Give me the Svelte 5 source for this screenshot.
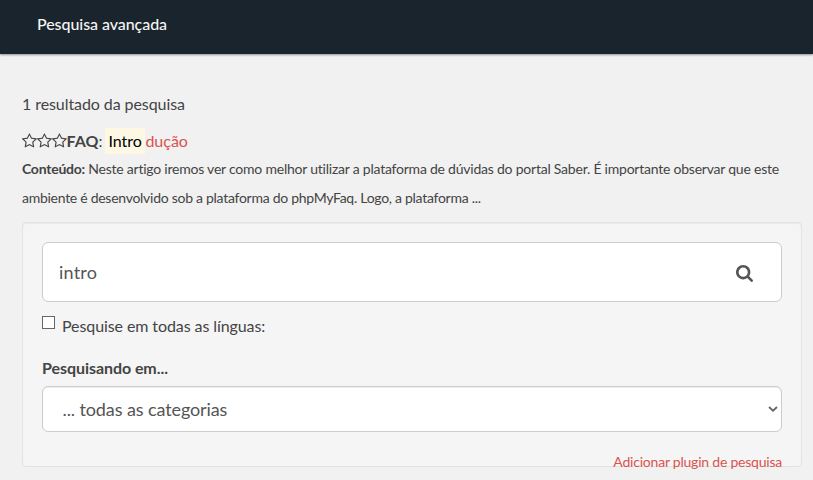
<script>
  let term = $state('intro');
  let allLanguages = $state(false);
  const stars = [0, 1, 2];
</script>

<header><h1>Pesquisa avançada</h1></header>
<main>
  <p class="count">1 resultado da pesquisa</p>
  <div class="result">
    <span class="stars">
      {#each stars as s (s)}
        <svg viewBox="64 0 1664 1792" aria-hidden="true"><path d="M1201 1004l306-297-422-62-189-382-189 382-422 62 306 297-73 421 378-199 377 199zm527-357q0 22-26 48l-363 354 86 500q1 7 1 20 0 50-41 50-19 0-40-12l-449-236-449 236q-22 12-40 12-21 0-31.5-14.5t-10.5-35.5q0-6 2-20l86-500-364-354q-25-27-25-48 0-37 56-46l502-73 225-455q19-41 49-41t49 41l225 455 502 73q56 9 56 46z" /></svg>
      {/each}
    </span><strong>FAQ</strong><span class="colon">:</span><a href="#faq"><mark>Intro</mark>dução</a>
  </div>
  <p class="content"><strong>Conteúdo:</strong> Neste artigo iremos ver como melhor utilizar a plataforma de dúvidas do portal Saber. É importante observar que este<br /><span class="second">ambiente é desenvolvido sob a plataforma do phpMyFaq. Logo, a plataforma ...</span></p>

  <form class="well">
    <div class="search">
      <input type="text" bind:value={term} aria-label="Pesquisa" />
      <button type="button" aria-label="Pesquisar">
        <svg viewBox="64 128 1664 1664" aria-hidden="true"><path d="M1216 832q0-185-131.5-316.5t-316.5-131.5-316.5 131.5-131.5 316.5 131.5 316.5 316.5 131.5 316.5-131.5 131.5-316.5zm512 832q0 52-38 90t-90 38q-54 0-90-38l-343-342q-179 124-399 124-143 0-273.5-55.5t-225-150-150-225-55.5-273.5 55.5-273.5 150-225 225-150 273.5-55.5 273.5 55.5 225 150 150 225 55.5 273.5q0 220-124 399l343 343q37 37 37 90z" /></svg>
      </button>
    </div>
    <label class="check"><input type="checkbox" bind:checked={allLanguages} /><span>Pesquise em todas as línguas:</span></label>
    <label class="heading" for="category">Pesquisando em...</label>
    <div class="select">
      <select id="category"><option>... todas as categorias</option></select>
      <svg viewBox="0 0 10 6" aria-hidden="true"><path d="M1 1l4 3.7L9 1" /></svg>
    </div>
    <a class="plugin" href="#plugin">Adicionar plugin de pesquisa</a>
  </form>
</main>

<style>
  :global(body) { background: #f1f1f1; }
  :global(#app) { font-family: Lato, sans-serif; font-size: 16px; color: #444; }
  * { box-sizing: border-box; }
  header { height: 54px; background: #1a242c; padding: 13px 37px 0; box-shadow: 0 1px 2px rgba(0, 0, 0, .4); }
  h1 { margin: 0; font-size: 16px; line-height: 22px; font-weight: 500; letter-spacing: -.06px; color: #f5f5f5; }
  main { min-height: 426px; padding: 35px 11px 0 22px; }
  p { margin: 0; }
  .count { height: 29px; line-height: 29px; letter-spacing: -.08px; }
  .result { display: flex; height: 26px; line-height: 26px; margin-top: 10px; }
  .stars { display: flex; align-items: center; }
  .stars svg { width: 14.86px; height: 16px; fill: #444; }
  a { color: #d9534f; text-decoration: none; }
  .result a { margin-left: 3px; }
  mark { display: inline-block; height: 26px; margin-right: .5px; padding: 0 3px; background: #fcf8e3; color: #000; }
  .content { font-size: 14px; line-height: 29px; letter-spacing: -.225px; white-space: nowrap; }
  .content strong { letter-spacing: -.24px; }
  .second { letter-spacing: -.275px; }
  .well { width: 780px; height: 245px; margin-top: 10px; padding: 19px; border: 1px solid #e3e3e3; border-radius: 4px; background: #f5f5f5; box-shadow: inset 0 1px 1px rgba(0, 0, 0, .05); display: flex; flex-direction: column; }
  .search { height: 60px; flex: none; display: flex; align-items: center; background: #fff; border: 1px solid #ccc; border-radius: 6px; }
  .search input { flex: 1; min-width: 0; padding: 0 16px; border: 0; outline: 0; background: transparent; font: 18px Lato, sans-serif; letter-spacing: .2px; color: #555; }
  button { display: flex; border: 0; padding: 0; margin: 2px 28px 0 0; background: none; }
  button svg { width: 17px; height: 17px; fill: #555; }
  .check { display: flex; height: 29px; margin-top: 9px; line-height: 29px; letter-spacing: -.09px; }
  .check input { appearance: none; width: 13px; height: 13px; margin: 5px 7px 0 0; border: 1px solid #666; background: #fff; }
  .heading { font-weight: 700; line-height: 26px; margin-top: 15px; letter-spacing: -.06px; }
  .select { height: 46px; flex: none; margin-top: 5px; padding-right: 3px; display: flex; align-items: center; background: #fff; border: 1px solid #ccc; border-radius: 6px; box-shadow: inset 0 1px 1px rgba(0, 0, 0, .075); }
  select { appearance: none; flex: 1; padding: 0 19.5px; border: 0; background: transparent; color: #555; font: 18px Lato, sans-serif; letter-spacing: -.1px; }
  .select svg { width: 10px; height: 6px; fill: none; stroke: #666; stroke-width: 1.8; }
  .plugin { align-self: flex-end; font-size: 14px; line-height: 20px; margin-top: 20px; letter-spacing: -.22px; flex: none; }
</style>
